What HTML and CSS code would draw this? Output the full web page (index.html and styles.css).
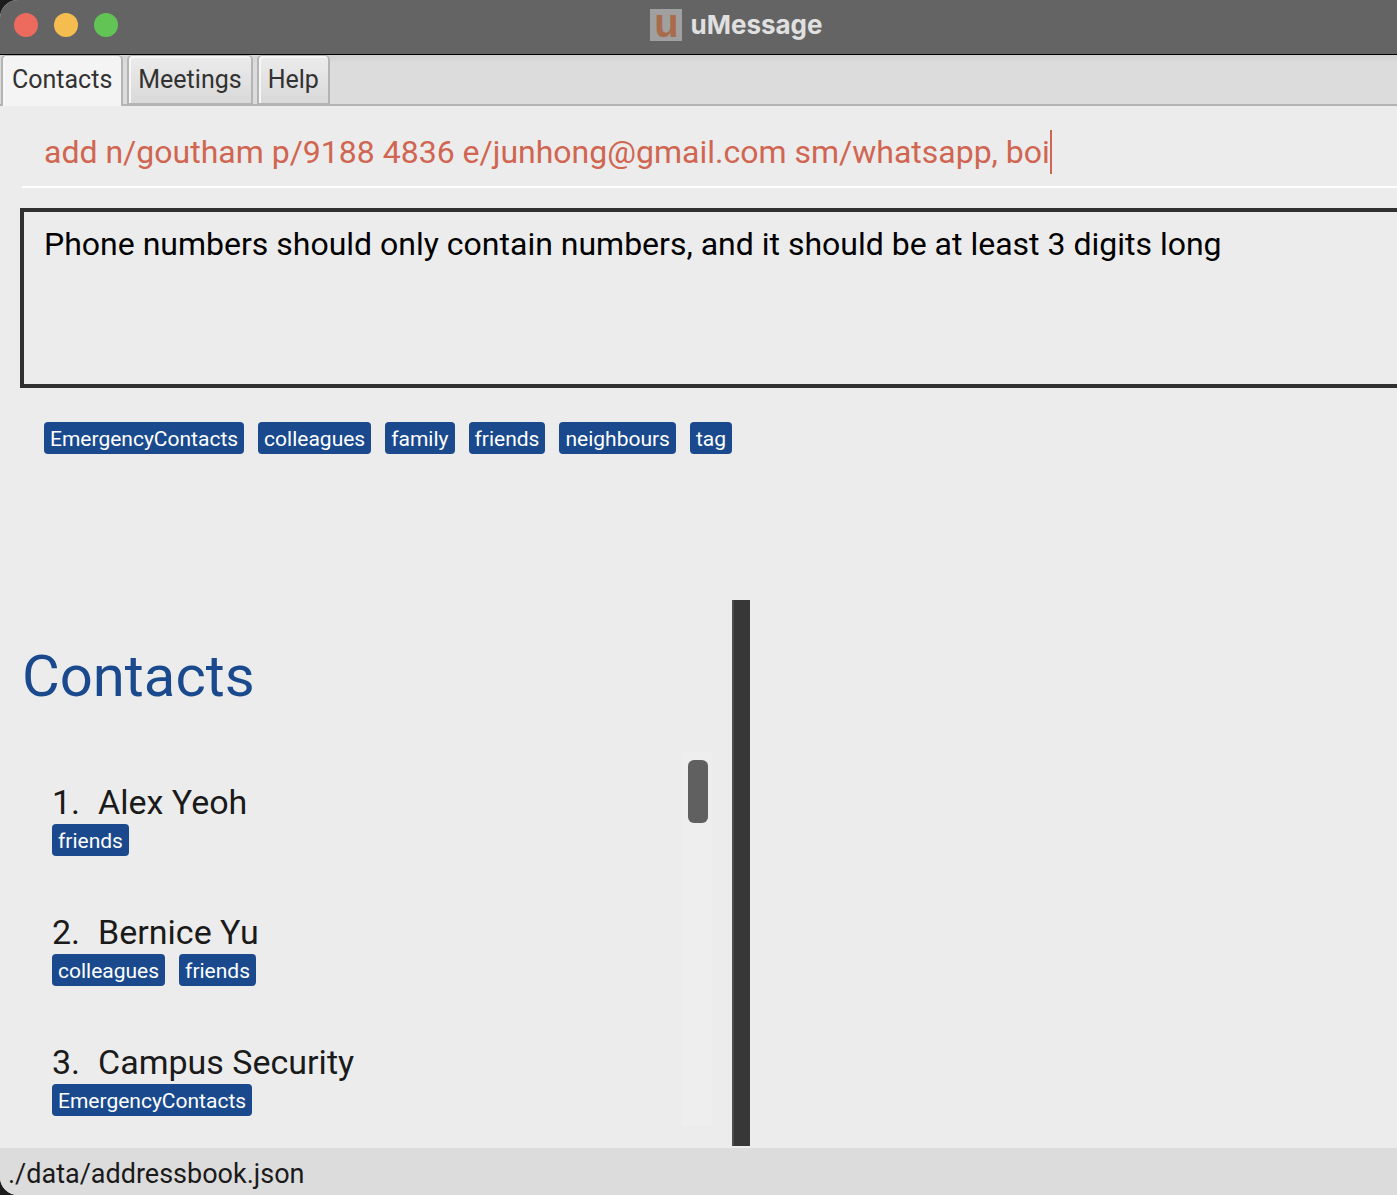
FILE: index.html
```html
<!DOCTYPE html>
<html lang="en">
<head>
<meta charset="utf-8">
<title>uMessage</title>
<link rel="stylesheet" href="styles.css">
</head>
<body>
<div class="window">
  <header class="titlebar">
    <div class="controls">
      <button class="light close" type="button" aria-label="Close"></button>
      <button class="light minimise" type="button" aria-label="Minimise"></button>
      <button class="light zoom" type="button" aria-label="Zoom"></button>
    </div>
    <div class="title"><span class="logo" aria-hidden="true">u</span><span>uMessage</span></div>
  </header>
  <nav class="tabs">
    <button class="tab active" type="button">Contacts</button>
    <button class="tab" type="button">Meetings</button>
    <button class="tab" type="button">Help</button>
  </nav>
  <main class="content">
    <div class="command">
      <input class="command-input" type="text" aria-label="Command" spellcheck="false" value="add n/goutham p/9188 4836 e/junhong@gmail.com sm/whatsapp, boi">
      <span class="caret"></span>
    </div>
    <textarea class="result" aria-label="Result" readonly>Phone numbers should only contain numbers, and it should be at least 3 digits long</textarea>
    <div class="tags all-tags">
      <span class="tag">EmergencyContacts</span>
      <span class="tag">colleagues</span>
      <span class="tag">family</span>
      <span class="tag">friends</span>
      <span class="tag">neighbours</span>
      <span class="tag">tag</span>
    </div>
    <div class="split">
      <section class="people">
        <h1 class="heading">Contacts</h1>
        <div class="list-area">
          <ol class="list">
            <li class="person">
              <div class="name"><span>1.</span><span>Alex Yeoh</span></div>
              <div class="tags"><span class="tag">friends</span></div>
            </li>
            <li class="person">
              <div class="name"><span>2.</span><span>Bernice Yu</span></div>
              <div class="tags"><span class="tag">colleagues</span><span class="tag">friends</span></div>
            </li>
            <li class="person">
              <div class="name"><span>3.</span><span>Campus Security</span></div>
              <div class="tags"><span class="tag">EmergencyContacts</span></div>
            </li>
          </ol>
          <div class="track"><div class="thumb"></div></div>
        </div>
      </section>
      <div class="divider"></div>
      <section class="details"></section>
    </div>
  </main>
  <footer class="status">./data/addressbook.json</footer>
</div>
</body>
</html>
```
FILE: styles.css
```css
* {
  box-sizing: border-box;
}

body {
  margin: 0;
  background: #1c1c1c;
  color: #1a1a1a;
  font-family: Roboto, "Liberation Sans", sans-serif;
}

button,
input,
textarea {
  font-family: inherit;
  margin: 0;
}

.window {
  display: flex;
  flex-direction: column;
  min-height: 100vh;
  background: #ececec;
  border-radius: 18px 0 0 18px;
  overflow: hidden;
}

/* Title bar */
.titlebar {
  display: grid;
  grid-template-columns: 1fr auto 1fr;
  align-items: center;
  width: calc(100% + 76px);
  height: 55px;
  padding: 0 14px 4px;
  background: #646464;
  border-bottom: 1px solid #000;
}

.controls {
  display: flex;
  gap: 16px;
}

.light {
  width: 24px;
  height: 24px;
  padding: 0;
  border: 0;
  border-radius: 50%;
}

.close { background: #ed6a5e; }
.minimise { background: #f5bd4f; }
.zoom { background: #61c454; }

.title {
  display: flex;
  align-items: center;
  gap: 8px;
  color: #e0e0e0;
  font: 700 26px/32px Inter, sans-serif;
}

.logo {
  width: 32px;
  height: 32px;
  background: #a0a0a0;
  color: #a86b4c;
  font: 700 40px/28px "Liberation Sans", sans-serif;
  text-align: center;
}

/* Tabs */
.tabs {
  display: flex;
  gap: 4px;
  height: 51px;
  padding: 0 1px;
  background: linear-gradient(#d2d2d2, #dcdcdc 8px);
  border-bottom: 2px solid #b4b4b4;
}

.tab {
  height: 50px;
  padding: 0 9px;
  border: 2px solid #b4b4b4;
  border-top-width: 1px;
  border-radius: 5px 5px 0 0;
  background: linear-gradient(#ececec, #d9d9d9);
  box-shadow: inset 2px 2px #f6f6f6;
  color: #323232;
  font-size: 25px;
  line-height: 44px;
}

.tab.active {
  height: 51px;
  padding-bottom: 2px;
  border-bottom: 0;
  background: #f4f4f4;
}

/* Command and result */
.content {
  display: flex;
  flex: 1;
  flex-direction: column;
  padding-bottom: 2px;
}

.command {
  display: flex;
  align-items: center;
  height: 82px;
  margin-left: 22px;
  padding: 12px 0 0 22px;
  border-bottom: 2px solid #fff;
}

.command-input {
  field-sizing: content;
  padding: 0;
  border: 0;
  outline: 0;
  background: transparent;
  color: #d06651;
  font-size: 32px;
}

.caret {
  width: 2px;
  height: 44px;
  background: #d06651;
}

.result {
  height: 180px;
  margin: 20px 0 0 20px;
  padding: 10px 20px;
  border: 4px solid #303030;
  border-right: 0;
  outline: 0;
  background: transparent;
  color: #000;
  font-size: 32px;
  line-height: 44px;
  resize: none;
}

/* Tags */
.tags {
  display: flex;
  flex-wrap: wrap;
  align-content: flex-start;
  gap: 14px;
}

.all-tags {
  min-height: 212px;
  padding: 34px 44px 0;
}

.tag {
  height: 32px;
  padding: 0 6px;
  border-radius: 4px;
  background: #1a4a8d;
  color: #fff;
  font-size: 21px;
  line-height: 34px;
}

/* Split pane */
.split {
  display: flex;
  flex: 1;
}

.people {
  display: flex;
  flex: 0 0 52.4%;
  flex-direction: column;
  padding: 40px 20px 20px 22px;
}

.heading {
  margin: 0;
  color: #1a4a8d;
  font-size: 58px;
  font-weight: 400;
  line-height: 72px;
}

.list-area {
  display: flex;
  flex: 1;
  margin-top: 40px;
}

.list {
  flex: 1;
  margin: 0;
  padding: 28px 30px 0;
  list-style: none;
}

.person {
  height: 130px;
}

.person:last-child {
  height: 86px;
}

.name {
  display: flex;
  gap: 18px;
  font-size: 34px;
  line-height: 44px;
}

.track {
  width: 30px;
  padding: 8px 4px 8px 6px;
  background: #eee;
}

.thumb {
  height: 63px;
  border-radius: 6px;
  background: #606060;
}

.divider {
  width: 18px;
  border-left: 2px solid #4c4c4c;
  background: #373737;
}

.details {
  flex: 1;
}

/* Status bar */
.status {
  height: 47px;
  padding: 5px 8px;
  background: #dcdcdc;
  font-size: 27px;
  line-height: 42px;
}
```
